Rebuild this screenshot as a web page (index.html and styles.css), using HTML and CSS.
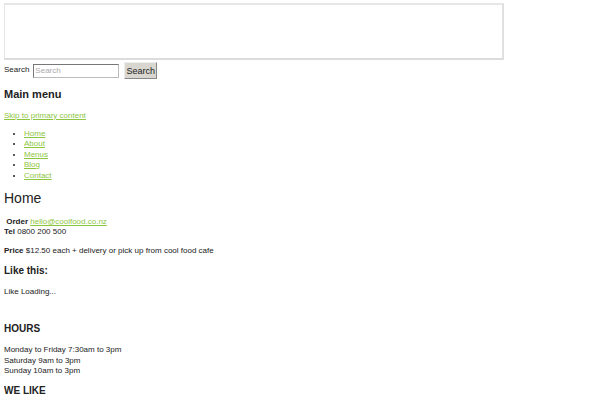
FILE: index.html
```html
<!DOCTYPE html>
<html>
<head>
<meta charset="utf-8">
<link rel="stylesheet" href="styles.css">
</head>
<body>
<div class="banner"></div>
<form class="search">
  <label class="search-label">Search</label>
  <input class="search-input" type="text" placeholder="Search">
  <button class="search-btn" type="button">Search</button>
</form>
<h3 class="menu-title">Main menu</h3>
<p class="skip"><a href="#">Skip to primary content</a></p>
<ul class="nav">
  <li><a href="#">Home</a></li>
  <li><a href="#">About</a></li>
  <li><a href="#">Menus</a></li>
  <li><a href="#">Blog</a></li>
  <li><a href="#">Contact</a></li>
</ul>
<h1 class="page-title">Home</h1>
<p class="contact"><b>&nbsp;Order</b> <a href="#">hello@coolfood.co.nz</a><br><b>Tel</b> 0800 200 500</p>
<p class="price"><b>Price</b> $12.50 each + delivery or pick up from cool food cafe</p>
<h3 class="like-title">Like this:</h3>
<p class="like">Like Loading...</p>
<h3 class="widget-title hours-title">HOURS</h3>
<p class="hours">Monday to Friday 7:30am to 3pm<br>Saturday 9am to 3pm<br>Sunday 10am to 3pm</p>
<h3 class="widget-title">WE LIKE</h3>
</body>
</html>
```
FILE: styles.css
```css
html, body {
  background: #fff;
}
body {
  margin: 3px 4px;
  font-family: "Liberation Sans", Arial, sans-serif;
  font-size: 8px;
  line-height: 10.5px;
  color: #222;
}
a {
  color: #8cc63f;
}
.banner {
  width: 497px;
  height: 53px;
  margin-left: -1px;
  border: 2px solid #e6e6e6;
  border-right-color: #e0e0e0;
  border-bottom-color: #dcdcdc;
}
.search {
  display: flex;
  align-items: center;
  margin-top: 2px;
  height: 17px;
}
.search-label {
  margin-right: 4px;
}
.search-input {
  width: 82px;
  height: 12px;
  padding: 0 1px;
  border: 1px solid #bbb;
  border-top-color: #777;
  border-left-color: #777;
  font: 8px "Liberation Sans", Arial, sans-serif;
  margin: 0 5px 0 0;
}
.search-input::placeholder {
  color: #aaa;
}
.search-btn {
  height: 17px;
  width: 33px;
  padding: 0;
  margin: 0;
  background: #d9d6d0;
  border: 1px solid #888;
  border-top-color: #eee;
  border-left-color: #eee;
  font: 9px "Liberation Sans", Arial, sans-serif;
  color: #222;
}
.menu-title {
  font-size: 11px;
  line-height: 13px;
  margin: 9px 0 0;
}
.skip {
  margin: 10px 0 0;
}
.nav {
  margin: 7px 0 0;
  padding-left: 20px;
}
.page-title {
  font-size: 14px;
  font-weight: normal;
  line-height: 16px;
  margin: 9px 0 0;
}
.contact {
  margin: 11px 0 0;
  line-height: 10px;
}
.price {
  margin: 9px 0 0;
}
.like-title {
  font-size: 10px;
  line-height: 12px;
  margin: 8px 0 0;
}
.like {
  margin: 10px 0 0;
}
.widget-title {
  font-size: 10px;
  line-height: 12px;
  margin: 8px 0 0;
}
.hours-title {
  margin-top: 26px;
}
.hours {
  margin: 10px 0 0;
}
```
